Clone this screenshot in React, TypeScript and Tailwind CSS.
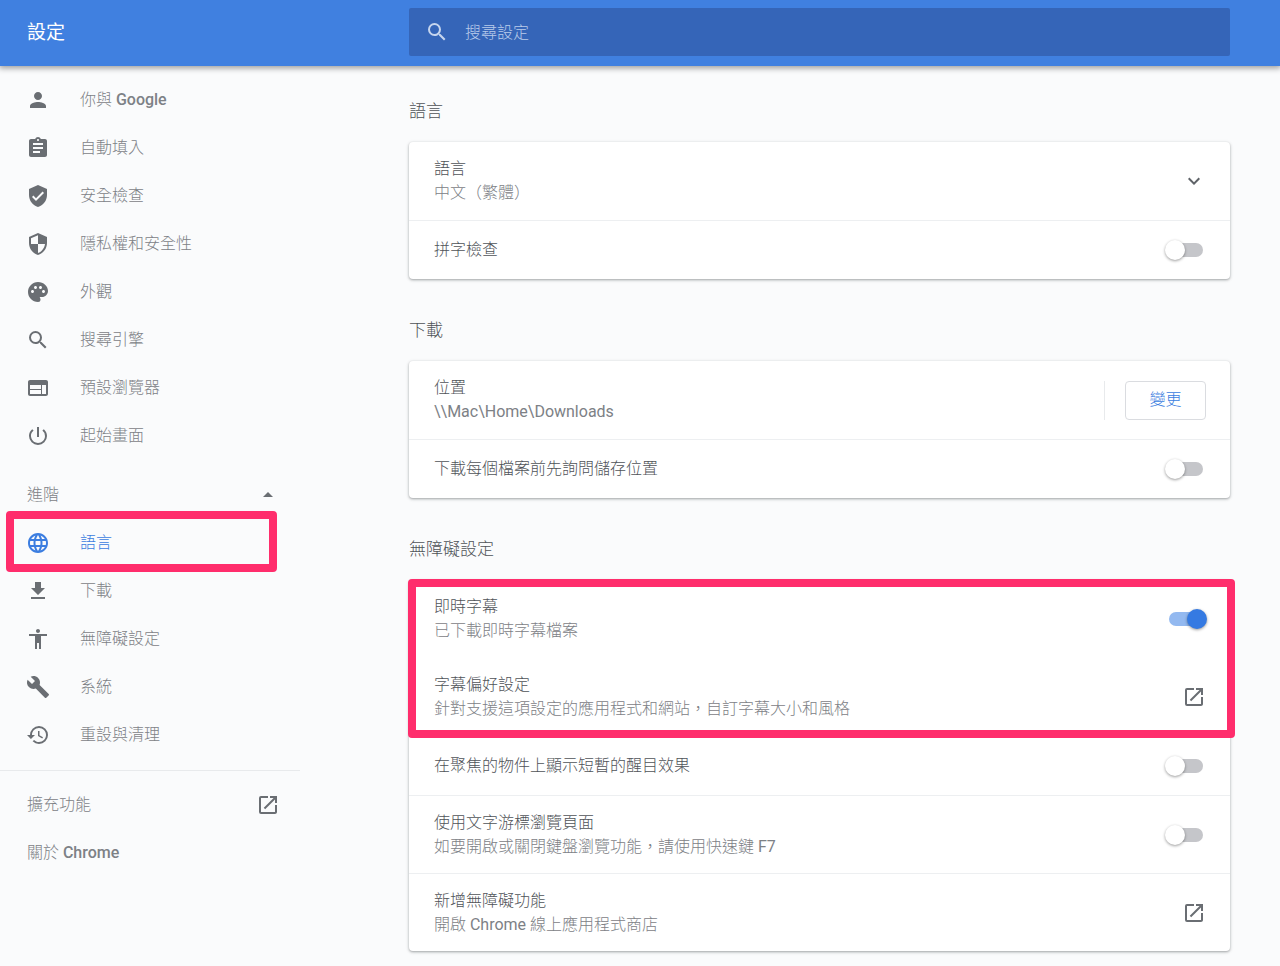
import { useState } from 'react'
import type { ReactNode } from 'react'
import type { IconType } from 'react-icons'
import {
  MdAccessibility,
  MdArrowDropUp,
  MdAssignment,
  MdBuild,
  MdExpandMore,
  MdFileDownload,
  MdHistory,
  MdLanguage,
  MdOpenInNew,
  MdPalette,
  MdPerson,
  MdPowerSettingsNew,
  MdSearch,
  MdSecurity,
  MdVerifiedUser,
  MdWeb
} from 'react-icons/md'

type MenuItem = {
  id: string
  icon: IconType
  label: ReactNode
}

const basicMenu: MenuItem[] = [
  {
    id: 'people',
    icon: MdPerson,
    label: (
      <>
        你與 <span className="font-medium">Google</span>
      </>
    )
  },
  { id: 'autofill', icon: MdAssignment, label: '自動填入' },
  { id: 'safety', icon: MdVerifiedUser, label: '安全檢查' },
  { id: 'privacy', icon: MdSecurity, label: '隱私權和安全性' },
  { id: 'appearance', icon: MdPalette, label: '外觀' },
  { id: 'search', icon: MdSearch, label: '搜尋引擎' },
  { id: 'browser', icon: MdWeb, label: '預設瀏覽器' },
  { id: 'startup', icon: MdPowerSettingsNew, label: '起始畫面' }
]

const advancedMenu: MenuItem[] = [
  { id: 'languages', icon: MdLanguage, label: '語言' },
  { id: 'downloads', icon: MdFileDownload, label: '下載' },
  { id: 'accessibility', icon: MdAccessibility, label: '無障礙設定' },
  { id: 'system', icon: MdBuild, label: '系統' },
  { id: 'reset', icon: MdHistory, label: '重設與清理' }
]

function Highlight({ className }: { className: string }) {
  return (
    <div
      aria-hidden="true"
      className={`pointer-events-none absolute z-10 rounded-[4px] border-8 border-[#ff2d6c] ${className}`}
    />
  )
}

function MenuLink({ item, active }: { item: MenuItem; active?: boolean }) {
  const Icon = item.icon
  return (
    <li className="relative">
      <a
        href={`#${item.id}`}
        className={`flex h-12 items-center gap-[30px] pl-[26px] ${
          active ? 'text-[#3b7de0]' : 'text-[#7d8186]'
        }`}
      >
        <Icon
          className={`size-6 shrink-0 ${active ? 'text-[#3b7de0]' : 'text-[#6a6e73]'}`}
        />
        <span>{item.label}</span>
      </a>
      {active && <Highlight className="-top-2 right-[23px] -bottom-[5px] left-[6px]" />}
    </li>
  )
}

function Section({ title, children }: { title: string; children: ReactNode }) {
  return (
    <section className="mb-[39px]">
      <h2 className="mb-[19px] text-[17px] leading-6 font-light text-[#4f5358]">
        {title}
      </h2>
      <div className="rounded-[4px] bg-white shadow-[0_1px_2px_0_rgba(60,64,67,0.3),0_1px_3px_1px_rgba(60,64,67,0.15)]">
        {children}
      </div>
    </section>
  )
}

type RowProps = {
  title: string
  sub?: ReactNode
  htmlFor?: string
  border?: boolean
  children: ReactNode
}

function Row({ title, sub, htmlFor, border, children }: RowProps) {
  const text = (
    <>
      <span className="block text-[#4f5358]">{title}</span>
      {sub && <span className="block text-[#7d8186]">{sub}</span>}
    </>
  )
  return (
    <div
      className={`flex items-center justify-between pr-6 pl-[25px] ${
        sub ? 'min-h-[78px]' : 'min-h-[59px]'
      } ${border ? 'border-t border-[#edeff1]' : ''}`}
    >
      {htmlFor ? (
        <label htmlFor={htmlFor} className="leading-6">
          {text}
        </label>
      ) : (
        <div className="leading-6">{text}</div>
      )}
      {children}
    </div>
  )
}

function Toggle({ id, defaultChecked = false }: { id: string; defaultChecked?: boolean }) {
  const [on, setOn] = useState(defaultChecked)
  return (
    <input
      id={id}
      type="checkbox"
      role="switch"
      checked={on}
      onChange={(e) => setOn(e.target.checked)}
      className="relative mr-[3px] h-[14px] w-[34px] shrink-0 appearance-none rounded-full bg-[#c5c6ca] before:absolute before:-top-[3px] before:-left-1 before:size-5 before:rounded-full before:bg-white before:shadow-[0_1px_3px_0_rgba(0,0,0,0.4)] before:content-[''] checked:bg-[#93b9f0] checked:before:left-[18px] checked:before:bg-[#357ae2]"
    />
  )
}

function ExternalLink({ href, label }: { href: string; label: string }) {
  return (
    <a href={href} aria-label={label} className="text-[#6a6e73]">
      <MdOpenInNew className="size-6" />
    </a>
  )
}

export default function App() {
  return (
    <div className="min-h-screen bg-[#fafbfc] font-[Roboto,'Noto_Sans_CJK_TC',sans-serif] text-[16px] font-light">
      <header className="relative flex h-[66px] items-start bg-[#4080e0] pt-2 pr-[50px] shadow-[0_1px_6px_1px_rgba(0,0,0,0.4)]">
        <h1 className="w-[409px] shrink-0 pl-[27px] text-[19px] leading-[50px] font-normal text-white">
          設定
        </h1>
        <div className="flex h-12 flex-1 items-center gap-4 rounded-[2px] bg-[#3565b8] pl-4 text-[#c6d5ee]">
          <MdSearch className="size-6 shrink-0" />
          <input
            type="search"
            aria-label="搜尋設定"
            placeholder="搜尋設定"
            className="h-full w-full bg-transparent outline-none placeholder:text-[#b9cbea]"
          />
        </div>
      </header>

      <div className="flex">
        <nav className="w-[300px] shrink-0 pt-[10px]">
          <ul>
            {basicMenu.map((item) => (
              <MenuLink key={item.id} item={item} />
            ))}
          </ul>
          <button
            type="button"
            aria-expanded="true"
            className="mt-[11px] flex h-12 w-full items-center justify-between pr-5 pl-[27px] text-[#7d8186]"
          >
            進階
            <MdArrowDropUp className="size-6 text-[#6a6e73]" />
          </button>
          <ul>
            {advancedMenu.map((item) => (
              <MenuLink key={item.id} item={item} active={item.id === 'languages'} />
            ))}
          </ul>
          <div className="mt-[11px] border-t border-[#e8eaec] pt-[10px] text-[#7d8186]">
            <a
              href="#extensions"
              className="flex h-12 items-center justify-between pr-5 pl-[27px]"
            >
              擴充功能
              <MdOpenInNew className="size-6 text-[#6a6e73]" />
            </a>
            <a href="#about" className="flex h-12 items-center pl-[27px]">
              <span>
                關於 <span className="font-medium">Chrome</span>
              </span>
            </a>
          </div>
        </nav>

        <main className="mr-[50px] -mb-6 ml-[109px] flex-1 pt-[33px]">
          <Section title="語言">
            <Row title="語言" sub="中文（繁體）">
              <button type="button" aria-label="展開語言" className="text-[#5f6368]">
                <MdExpandMore className="size-6" />
              </button>
            </Row>
            <Row title="拼字檢查" htmlFor="spellcheck" border>
              <Toggle id="spellcheck" />
            </Row>
          </Section>

          <Section title="下載">
            <Row
              title="位置"
              sub={<span className="font-normal">{'\\\\Mac\\Home\\Downloads'}</span>}
            >
              <div className="border-l border-[#e8eaec] pl-5">
                <button
                  type="button"
                  className="h-[39px] w-[81px] rounded-[4px] border border-[#dadce0] text-[#3b7de0]"
                >
                  變更
                </button>
              </div>
            </Row>
            <Row title="下載每個檔案前先詢問儲存位置" htmlFor="ask-location" border>
              <Toggle id="ask-location" />
            </Row>
          </Section>

          <Section title="無障礙設定">
            <div className="relative">
              <Row title="即時字幕" sub="已下載即時字幕檔案" htmlFor="live-caption">
                <Toggle id="live-caption" defaultChecked />
              </Row>
              <Row
                title="字幕偏好設定"
                sub="針對支援這項設定的應用程式和網站，自訂字幕大小和風格"
              >
                <ExternalLink href="#captions" label="字幕偏好設定" />
              </Row>
              <Highlight className="-top-px -right-[5px] -bottom-[2px] -left-px" />
            </div>
            <Row
              title="在聚焦的物件上顯示短暫的醒目效果"
              htmlFor="focus-highlight"
              border
            >
              <Toggle id="focus-highlight" />
            </Row>
            <Row
              title="使用文字游標瀏覽頁面"
              sub={
                <>
                  如要開啟或關閉鍵盤瀏覽功能，請使用快速鍵{' '}
                  <span className="font-normal">F7</span>
                </>
              }
              htmlFor="caret-browsing"
              border
            >
              <Toggle id="caret-browsing" />
            </Row>
            <Row
              title="新增無障礙功能"
              sub={
                <>
                  開啟 <span className="font-normal">Chrome</span> 線上應用程式商店
                </>
              }
              border
            >
              <ExternalLink href="#web-store" label="新增無障礙功能" />
            </Row>
          </Section>
        </main>
      </div>
    </div>
  )
}
